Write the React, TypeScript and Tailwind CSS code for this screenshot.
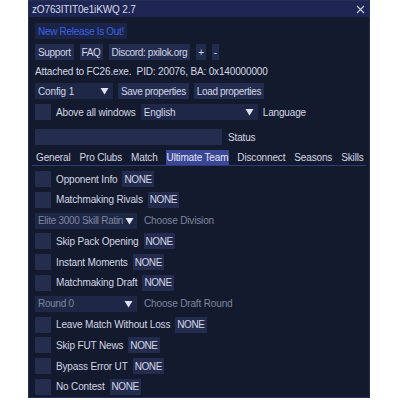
import type { ReactNode } from 'react';

const font = { fontFamily: '"Liberation Sans", Arial, sans-serif', letterSpacing: '-0.15px' };

const Btn = ({ children, className = '' }: { children: ReactNode; className?: string }) => (
  <div className={`flex h-[16px] items-center whitespace-nowrap bg-[#232c4e] px-[3px] text-[#d3d7e6] ${className}`}>{children}</div>
);

const Arrow = () => (
  <svg width="9" height="8" viewBox="0 0 9 8" className="shrink-0">
    <path d="M0.5 1 L8.5 1 L4.5 7.5 Z" fill="#dfe3f0" />
  </svg>
);

const Combo = ({ label, width, dim = false }: { label: string; width: string; dim?: boolean }) => (
  <div className={`flex h-[16px] shrink-0 ${width} items-center justify-between gap-[2px] bg-[#1f2746] pl-[3px] pr-[4px]`}>
    <span className={`whitespace-nowrap ${dim ? 'text-[#7e869e] tracking-[-0.3px]' : 'text-[#d3d7e6]'}`}>{label}</span>
    <Arrow />
  </div>
);

const Check = () => <div className="h-[16px] w-[16px] shrink-0 bg-[#242d4d]" />;

const Toggle = ({ label }: { label: string }) => (
  <div className="flex h-[16px] items-center whitespace-nowrap">
    <Check />
    <span className="ml-[5px] text-[#d3d7e6]">{label}</span>
    <Btn className="ml-[5px] px-[2px]! tracking-[-0.4px]">NONE</Btn>
  </div>
);

const tabs = ['General', 'Pro Clubs', 'Match', 'Ultimate Team', 'Disconnect', 'Seasons', 'Skills'];

export default function App() {
  return (
    <div className="h-[400px] w-[400px] bg-white text-[10px]" style={font}>
      <div className="ml-[28px] flex h-[398px] w-[342px] flex-col border border-[#262f52] bg-[#131a2d]">
        <div className="flex h-[16px] shrink-0 items-center justify-between bg-[#1e2654] pl-[3px] pr-[4px] text-[#d8dcea]">
          <span>zO763ITIT0e1iKWQ 2.7</span>
          <svg width="9" height="9" viewBox="0 0 9 9">
            <path d="M1 1 L8 8 M8 1 L1 8" stroke="#c8cde0" strokeWidth="1.1" />
          </svg>
        </div>
        <div className="flex flex-col px-[6px] pt-[6px]">
          <div className="flex">
            <Btn className="text-[#3760e8]! bg-[#1c2446]! tracking-[-0.3px]">New Release Is Out!</Btn>
          </div>
          <div className="mt-[5px] flex gap-[6px] tracking-[-0.35px]">
            <Btn>Support</Btn>
            <Btn className="px-[2px]!">FAQ</Btn>
            <Btn>Discord: pxilok.org</Btn>
            <Btn className="px-[2px]!">+</Btn>
            <Btn className="px-[2px]!">-</Btn>
          </div>
          <div className="mt-[5px] flex h-[13px] items-center whitespace-nowrap text-[#d3d7e6]">
            Attached to FC26.exe.&nbsp;&nbsp;PID: 20076, BA: 0x140000000
          </div>
          <div className="mt-[5px] flex gap-[5px]">
            <Combo label="Config 1" width="w-[78px]" />
            <Btn className="tracking-[-0.35px]">Save properties</Btn>
            <Btn className="tracking-[-0.35px]">Load properties</Btn>
          </div>
          <div className="mt-[5px] flex items-center whitespace-nowrap">
            <Check />
            <span className="ml-[5px] text-[#d3d7e6]">Above all windows</span>
            <div className="ml-[5px]">
              <Combo label="English" width="w-[117px]" />
            </div>
            <span className="ml-[5px] text-[#d3d7e6]">Language</span>
          </div>
          <div className="mt-[9px] flex items-center">
            <div className="h-[16px] w-[187px] bg-[#242d4d]" />
            <span className="ml-[6px] text-[#d3d7e6]">Status</span>
          </div>
        </div>
        <div className="mx-[3px] mt-[5px] flex gap-[7px] border-b border-[#2f3a78] pl-[3px]">
          {tabs.map((t) => (
            <div
              key={t}
              className={`flex h-[15px] items-center whitespace-nowrap px-[1px] ${t === 'Ultimate Team' ? 'bg-[#3a4796] text-[#e4e7f4]' : 'text-[#d3d7e6]'}`}
            >
              {t}
            </div>
          ))}
        </div>
        <div className="flex flex-col gap-[4.8px] px-[6px] pt-[5px]">
          <Toggle label="Opponent Info" />
          <Toggle label="Matchmaking Rivals" />
          <div className="flex items-center whitespace-nowrap">
            <Combo label="Elite 3000 Skill Ratin" width="w-[102px]" dim />
            <span className="ml-[7px] text-[#7e869e]">Choose Division</span>
          </div>
          <Toggle label="Skip Pack Opening" />
          <Toggle label="Instant Moments" />
          <Toggle label="Matchmaking Draft" />
          <div className="flex items-center whitespace-nowrap">
            <Combo label="Round 0" width="w-[102px]" dim />
            <span className="ml-[7px] text-[#7e869e]">Choose Draft Round</span>
          </div>
          <Toggle label="Leave Match Without Loss" />
          <Toggle label="Skip FUT News" />
          <Toggle label="Bypass Error UT" />
          <Toggle label="No Contest" />
        </div>
      </div>
    </div>
  );
}
